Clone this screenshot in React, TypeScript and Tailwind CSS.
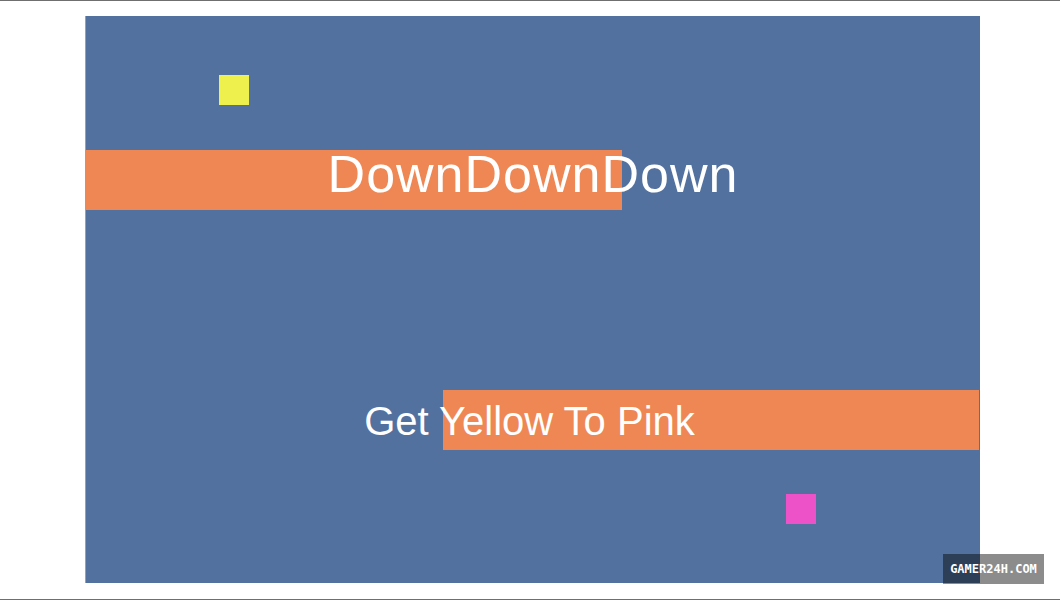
const sans = { fontFamily: '"Liberation Sans", Arial, sans-serif' };

// Horizontal platforms on the play field (canvas-relative coordinates)
const bars = [
  { id: 'top', className: 'left-0 top-[134px]' },
  { id: 'bottom', className: 'left-[357px] top-[374px]' },
];

export default function App() {
  return (
    <main className="h-[600px] w-[1060px] bg-white border-y border-[#6f6f6f] overflow-hidden relative">
      {/* Play field */}
      <div className="ml-[85px] mt-[15px] w-[895px] h-[567px] border-l border-[#8ea2c2] bg-[#53719f] relative overflow-hidden">
        {bars.map((b) => (
          <div key={b.id} className={`absolute w-[536px] h-[60px] bg-[#ee8753] ${b.className}`} />
        ))}

        {/* Player and goal */}
        <div className="absolute left-[133px] top-[59px] w-[30px] h-[30px] bg-[#eef04e]" />
        <div className="absolute left-[700px] top-[478px] w-[30px] h-[30px] bg-[#ee52c9]" />

        {/* Level texts */}
        <div
          className="absolute left-0 right-0 top-[132px] text-center text-white text-[52px] leading-none tracking-[1px] whitespace-nowrap"
          style={sans}
        >
          DownDownDown
        </div>
        <div
          className="absolute left-0 right-[7px] top-[385px] text-center text-white text-[40px] leading-none whitespace-nowrap"
          style={sans}
        >
          Get Yellow To Pink
        </div>
      </div>

      {/* Site badge */}
      <div
        className="absolute left-[943px] top-[553px] w-[101px] h-[30px] bg-black/45 flex items-center justify-center text-white text-[12px] font-bold"
        style={{ fontFamily: '"DejaVu Sans Mono", "Liberation Mono", monospace' }}
      >
        GAMER24H.COM
      </div>
    </main>
  );
}
